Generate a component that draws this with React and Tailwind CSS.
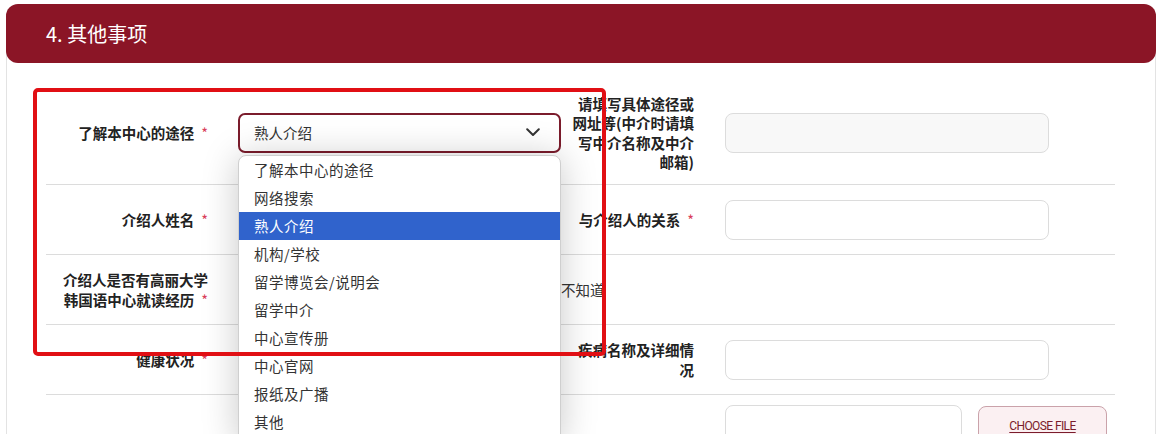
export default function App() {
  const items = [
    "了解本中心的途径",
    "网络搜索",
    "熟人介绍",
    "机构/学校",
    "留学博览会/说明会",
    "留学中介",
    "中心宣传册",
    "中心官网",
    "报纸及广播",
    "其他",
  ];
  const star = <span className="ml-[7px] text-[#d9405a] font-normal">*</span>;
  return (
    <div className="relative w-[1161px] h-[434px] overflow-hidden bg-white font-['Noto_Sans_CJK_SC','Noto_Sans',sans-serif] text-[#222]">
      <div className="ml-[6px] mt-[4px] w-[1150px] h-[600px] border-x border-[#e3e3e3] rounded-t-[12px]">
        <div className="h-[59px] -mx-px bg-[#8b1526] rounded-[12px] flex items-center pl-[40px] text-white text-[20px]">
          4. 其他事项
        </div>
        <div className="pl-[39px] pr-[40px] pt-[18px]">
          {/* Row 1 */}
          <div className="flex items-center h-[104px] border-b border-[#dcdcdc]">
            <div className="w-[192px] shrink-0 pl-[10px] pr-[30px] text-right font-bold text-[14.5px] leading-[20px]">
              了解本中心的途径{star}
            </div>
            <div className="relative w-[323px] shrink-0">
              <div className="h-[40px] border-2 border-[#7b1c2c] rounded-[7px] flex items-center justify-between pl-[14px] pr-[19px] text-[14.5px] text-[#333]">
                <span>熟人介绍</span>
                <svg width="14" height="9" viewBox="0 0 14 9" fill="none">
                  <path d="M1.2 1.2 L7 7 L12.8 1.2" stroke="#333" strokeWidth="2" strokeLinecap="round" strokeLinejoin="round" />
                </svg>
              </div>
              <div className="absolute left-0 top-full mt-[2px] w-[323px] z-10 bg-white border border-[#cfcfcf] rounded-[8px] shadow-[0_2px_36px_rgba(0,0,0,0.22)] pb-[6px] text-[14.5px] text-[#333] tracking-[0.5px]">
                {items.map((it, i) => (
                  <div
                    key={i}
                    className={
                      "h-[28px] flex items-center pl-[15px] " +
                      (i === 2 ? "bg-[#3063cc] text-white" : "")
                    }
                  >
                    {it}
                  </div>
                ))}
              </div>
            </div>
            <div className="w-[164px] shrink-0 pr-[31px] flex justify-end">
              <div className="w-[124px] text-right font-bold text-[14.5px] leading-[19.5px]">
                请填写具体途径或网址等(中介时请填写中介名称及中介邮箱)
              </div>
            </div>
            <div className="w-[324px] h-[40px] rounded-[8px] border border-[#dcdcdc] bg-[#f8f8f8]"></div>
          </div>
          {/* Row 2 */}
          <div className="flex items-center h-[70px] border-b border-[#dcdcdc]">
            <div className="w-[192px] shrink-0 pl-[10px] pr-[30px] text-right font-bold text-[14.5px] leading-[20px]">
              介绍人姓名{star}
            </div>
            <div className="w-[323px] shrink-0 h-[40px] rounded-[8px] border border-[#dcdcdc]"></div>
            <div className="w-[164px] shrink-0 pr-[31px] flex justify-end">
              <div className="w-[134px] text-right font-bold text-[14.5px] leading-[19.5px] whitespace-nowrap">
                与介绍人的关系{star}
              </div>
            </div>
            <div className="w-[324px] h-[40px] rounded-[8px] border border-[#dcdcdc]"></div>
          </div>
          {/* Row 3 */}
          <div className="flex items-center h-[70px] border-b border-[#dcdcdc]">
            <div className="w-[192px] shrink-0 pl-[10px] pr-[30px] text-right font-bold text-[14.5px] leading-[20px]">
              介绍人是否有高丽大学韩国语中心就读经历{star}
            </div>
            <div className="w-[323px] shrink-0 flex items-center justify-end gap-[6px] text-[14.5px] text-[#333]">
              <span className="w-[14px] h-[14px] rounded-full border border-[#999]"></span>
              <span>是</span>
              <span className="ml-[14px] w-[14px] h-[14px] rounded-full border border-[#999]"></span>
              <span>否</span>
              <span className="ml-[14px] w-[14px] h-[14px] rounded-full border border-[#999]"></span>
            </div>
            <span className="text-[14.5px] text-[#333]">不知道</span>
          </div>
          {/* Row 4 */}
          <div className="flex items-center h-[70px] border-b border-[#dcdcdc]">
            <div className="w-[192px] shrink-0 pl-[10px] pr-[30px] text-right font-bold text-[14.5px] leading-[20px]">
              健康状况{star}
            </div>
            <div className="w-[323px] shrink-0 h-[40px] rounded-[8px] border border-[#dcdcdc]"></div>
            <div className="w-[164px] shrink-0 pr-[31px] flex justify-end">
              <div className="w-[124px] text-right font-bold text-[14.5px] leading-[19.5px]">
                疾病名称及详细情况
              </div>
            </div>
            <div className="w-[324px] h-[40px] rounded-[8px] border border-[#dcdcdc]"></div>
          </div>
          {/* Row 5 */}
          <div className="flex items-start pt-[10px]">
            <div className="w-[192px] shrink-0"></div>
            <div className="w-[323px] shrink-0"></div>
            <div className="w-[164px] shrink-0"></div>
            <div className="w-[237px] h-[40px] rounded-[8px] border border-[#dcdcdc]"></div>
            <div className="ml-[16px] mt-px w-[129px] h-[40px] rounded-[8px] border border-[#caa2aa] bg-[#fbf0f2] flex items-center justify-center">
              <span className="font-['Roboto',sans-serif] text-[12px] tracking-[-0.6px] text-[#7b1c2c] underline underline-offset-2">
                CHOOSE FILE
              </span>
            </div>
          </div>
        </div>
      </div>
      {/* annotation box */}
      <div className="absolute left-[33px] top-[88px] w-[573px] h-[268px] border-4 border-[#e10f14] rounded-[5px] z-20 pointer-events-none"></div>
    </div>
  );
}
